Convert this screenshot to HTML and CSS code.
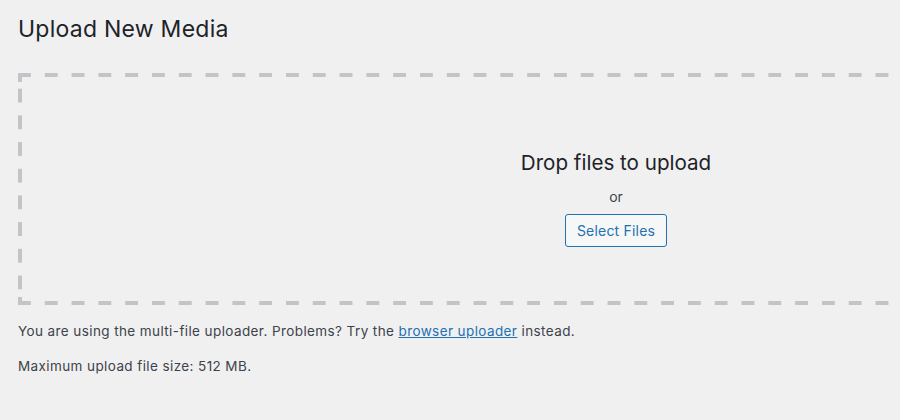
FILE: index.html
```html
<!DOCTYPE html>
<html lang="en">
<head>
<meta charset="utf-8">
<title>Upload New Media</title>
<link rel="stylesheet" href="styles.css">
</head>
<body>
<div class="wrap">
  <h1 class="page-title">Upload New Media</h1>
  <div class="drop-zone">
    <div class="drop-inside">
      <p class="drop-info">Drop files to upload</p>
      <p class="drop-or">or</p>
      <button class="select-btn" type="button">Select Files</button>
    </div>
  </div>
  <p class="note">You are using the multi-file uploader. Problems? Try the <a href="#">browser uploader</a> instead.</p>
  <p class="note max">Maximum upload file size: 512 MB.</p>
</div>
</body>
</html>
```
FILE: styles.css
```css
html, body {
  margin: 0;
  padding: 0;
  overflow: hidden;
}
body {
  background: #f0f0f1;
  color: #3c434a;
  font-family: Inter, "Noto Sans", sans-serif;
  font-size: 13.5px;
  width: 900px;
  height: 420px;
}
.wrap {
  padding: 0 0 0 18px;
}
.page-title {
  margin: 0;
  padding-top: 15px;
  font-size: 23px;
  font-weight: 400;
  line-height: 29px;
  letter-spacing: 0.25px;
  color: #1d2327;
}
.drop-zone {
  margin-top: 29px;
  width: 1196px;
  height: 232px;
  box-sizing: border-box;
  padding: 4px;
  background-color: transparent;
  background-image:
    linear-gradient(#c3c4c7, #c3c4c7),
    linear-gradient(#c3c4c7, #c3c4c7),
    linear-gradient(to right, #c3c4c7 0 13px, transparent 13px),
    linear-gradient(to right, #c3c4c7 0 13px, transparent 13px),
    linear-gradient(to bottom, #c3c4c7 0 13.4px, transparent 13.4px);
  background-size:
    4px 9px,
    4px 8px,
    26.8px 4px,
    26.8px 4px,
    4px 26.7px;
  background-position:
    left top,
    left bottom,
    left top,
    left bottom,
    left 0 top 15.7px;
  background-repeat:
    no-repeat,
    no-repeat,
    repeat-x,
    repeat-x,
    repeat-y;
}
.drop-inside {
  display: flex;
  flex-direction: column;
  align-items: center;
  padding-top: 72px;
}
.drop-info {
  margin: 0;
  font-size: 20.6px;
  line-height: 28px;
  color: #1d2327;
}
.drop-or {
  margin: 11px 0 0;
  font-size: 14px;
  line-height: 18px;
  color: #3c434a;
}
.select-btn {
  margin-top: 8px;
  width: 102px;
  height: 33px;
  padding: 0 10px;
  border: 1px solid #2271b1;
  border-radius: 3px;
  background: #f6f7f7;
  color: #2271b1;
  font-family: inherit;
  font-size: 14px;
  letter-spacing: 0.2px;
}
.note {
  margin: 16px 0 0;
  line-height: 20px;
  letter-spacing: 0.4px;
}
.note.max {
  margin-top: 15px;
}
.note a {
  color: #2271b1;
  text-decoration: underline;
}
```
